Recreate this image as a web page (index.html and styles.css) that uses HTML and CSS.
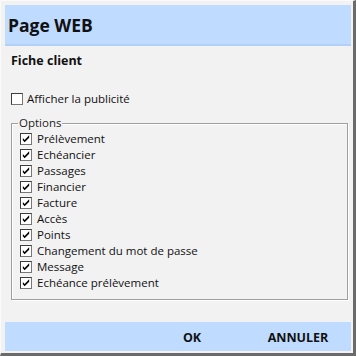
FILE: index.html
```html
<!DOCTYPE html>
<html lang="fr">
<head>
<meta charset="utf-8">
<title>Page WEB</title>
<link rel="stylesheet" href="styles.css">
</head>
<body>
<div class="window">
  <header class="titlebar"><h1 class="title">Page WEB</h1></header>
  <main class="content">
    <h2 class="subtitle">Fiche client</h2>
    <label class="check single"><span class="box"></span><span>Afficher la publicité</span></label>
    <fieldset class="group">
      <legend class="legend">Options</legend>
      <label class="check"><span class="box on"><svg viewBox="0 0 11 11"><path d="M2 4.5 L4 6.5 L9 1.5 L9 4 L4 9 L2 7 Z"/></svg></span><span>Prélèvement</span></label>
      <label class="check"><span class="box on"><svg viewBox="0 0 11 11"><path d="M2 4.5 L4 6.5 L9 1.5 L9 4 L4 9 L2 7 Z"/></svg></span><span>Echéancier</span></label>
      <label class="check"><span class="box on"><svg viewBox="0 0 11 11"><path d="M2 4.5 L4 6.5 L9 1.5 L9 4 L4 9 L2 7 Z"/></svg></span><span>Passages</span></label>
      <label class="check"><span class="box on"><svg viewBox="0 0 11 11"><path d="M2 4.5 L4 6.5 L9 1.5 L9 4 L4 9 L2 7 Z"/></svg></span><span>Financier</span></label>
      <label class="check"><span class="box on"><svg viewBox="0 0 11 11"><path d="M2 4.5 L4 6.5 L9 1.5 L9 4 L4 9 L2 7 Z"/></svg></span><span>Facture</span></label>
      <label class="check"><span class="box on"><svg viewBox="0 0 11 11"><path d="M2 4.5 L4 6.5 L9 1.5 L9 4 L4 9 L2 7 Z"/></svg></span><span>Accès</span></label>
      <label class="check"><span class="box on"><svg viewBox="0 0 11 11"><path d="M2 4.5 L4 6.5 L9 1.5 L9 4 L4 9 L2 7 Z"/></svg></span><span>Points</span></label>
      <label class="check"><span class="box on"><svg viewBox="0 0 11 11"><path d="M2 4.5 L4 6.5 L9 1.5 L9 4 L4 9 L2 7 Z"/></svg></span><span>Changement du mot de passe</span></label>
      <label class="check"><span class="box on"><svg viewBox="0 0 11 11"><path d="M2 4.5 L4 6.5 L9 1.5 L9 4 L4 9 L2 7 Z"/></svg></span><span>Message</span></label>
      <label class="check"><span class="box on"><svg viewBox="0 0 11 11"><path d="M2 4.5 L4 6.5 L9 1.5 L9 4 L4 9 L2 7 Z"/></svg></span><span>Echéance prélèvement</span></label>
    </fieldset>
  </main>
  <footer class="actions">
    <button class="btn" type="button">OK</button>
    <button class="btn" type="button">ANNULER</button>
  </footer>
</div>
</body>
</html>
```

FILE: styles.css
```css
* { box-sizing: border-box; }
html, body { margin: 0; padding: 0; }
body {
  width: 356px;
  height: 356px;
  background: #f2f2f2;
  font-family: "Open Sans", "Noto Sans", sans-serif;
  color: #000;
}
.window {
  width: 356px;
  height: 356px;
  padding: 4px 2px 2px 4px;
  background: #f2f2f2;
  border-top: 1px solid #fafafa;
  border-left: 1px solid #fafafa;
  border-right: 3px solid #6b6b6b;
  border-bottom: 3px solid #6b6b6b;
  display: flex;
  flex-direction: column;
}
.titlebar {
  height: 41px;
  background: #bfdbff;
  border-bottom: 2px solid #b3d0f8;
  display: flex;
  align-items: center;
  padding-left: 3px;
}
.title {
  margin: 0;
  font-size: 17.5px;
  font-weight: 700;
  line-height: 1;
  color: #111;
  padding-top: 2px;
}
.content {
  flex: 1;
  display: flex;
  flex-direction: column;
  padding: 0 3px 0 6px;
}
.subtitle {
  margin: 0;
  padding-top: 6px;
  font-size: 12.5px;
  font-weight: 700;
  line-height: 18px;
  color: #111;
}
.check {
  display: flex;
  align-items: center;
  gap: 5px;
  font-size: 11.5px;
  line-height: 16px;
  height: 16px;
  color: #111;
}
.single {
  margin-top: 21px;
  gap: 4px;
}
.box {
  width: 12px;
  height: 12px;
  border: 1px solid #3c3c3c;
  border-right-color: #777;
  border-bottom-color: #777;
  background: #fff;
  display: flex;
  align-items: center;
  justify-content: center;
  flex: none;
}
.box svg {
  width: 10px;
  height: 10px;
  fill: #000;
}
.group {
  margin: 9px 0 0 0;
  padding: 1px 0 8px 8px;
  border: 1px solid #a0a0a0;
  box-shadow: 1px 1px 0 #fff, inset 1px 1px 0 #fff;
  display: flex;
  flex-direction: column;
  min-width: 0;
}
.legend {
  padding: 0 1px;
  margin-left: -2px;
  font-size: 11.5px;
  line-height: 14px;
  color: #222;
}
.actions {
  height: 29px;
  background: #bfdbff;
  display: flex;
  justify-content: flex-end;
}
.btn {
  width: 106px;
  height: 29px;
  border: 0;
  background: transparent;
  font-family: "Open Sans", "Noto Sans", sans-serif;
  font-weight: 700;
  font-size: 12.5px;
  color: #111;
  padding: 0;
  padding-top: 2px;
}
```
